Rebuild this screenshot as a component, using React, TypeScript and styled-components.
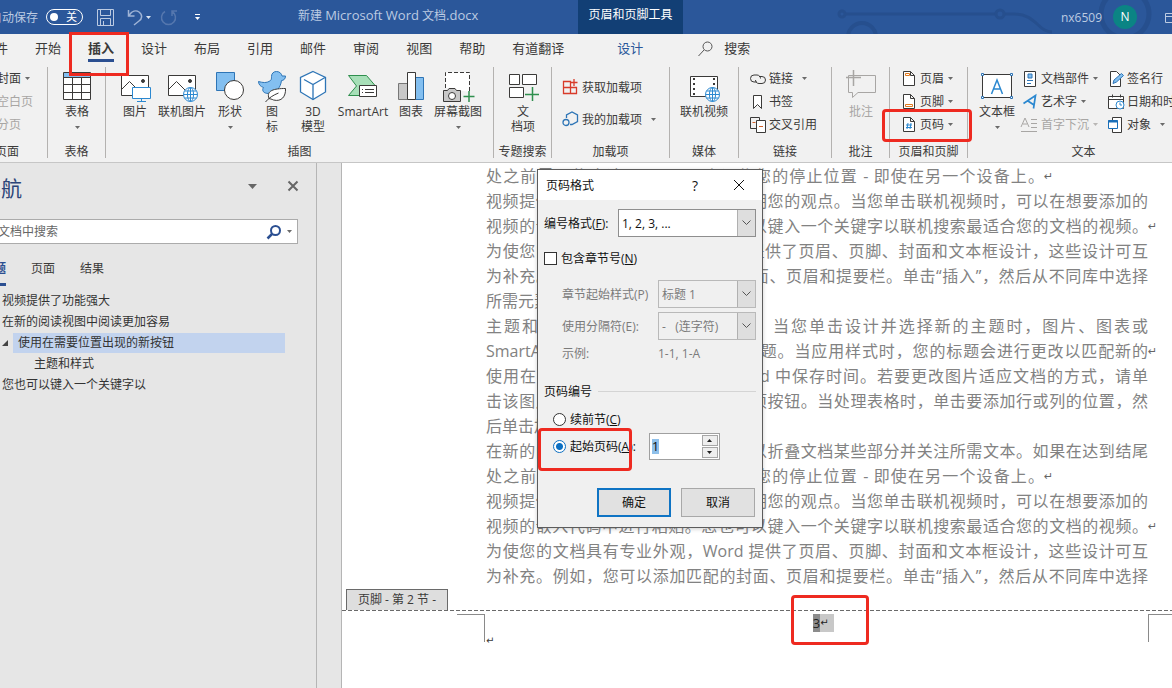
import React, { useEffect, useRef } from "react";
import styled, { createGlobalStyle, css } from "styled-components";

const GlobalStyle = createGlobalStyle`
  * { box-sizing: border-box; }
  body {
    margin: 0;
    overflow: hidden;
    background: #f1f1f1;
    color: #3b3a39;
    font: 12px/15px "Open Sans", "Noto Sans CJK SC", sans-serif;
  }
  button, input, select {
    margin: 0;
    padding: 0;
    border: 0;
    background: none;
    color: inherit;
    font: inherit;
  }
  svg { display: block; flex: none; overflow: visible; }
`;

const Shell = styled.div`
  position: relative;
  display: flex;
  flex-direction: column;
  height: 100vh;
  overflow: hidden;
`;

/* ---------- title bar ---------- */

const TitleBar = styled.header`
  position: relative;
  z-index: 0;
  display: flex;
  flex: none;
  align-items: center;
  height: 34px;
  overflow: hidden;
  background: #2b579a;
  color: #bccbe2;
`;

const QuickAccess = styled.div`
  display: flex;
  flex: 0 0 298px;
  align-items: center;
  height: 32px;
  margin-left: -10px;
`;

const AutoSave = styled.label`
  display: flex;
  align-items: center;
  gap: 8px;
  margin-right: 14px;
  white-space: nowrap;
`;

const Switch = styled.button`
  display: flex;
  align-items: center;
  justify-content: space-between;
  width: 37px;
  height: 16px;
  padding: 0 5px 0 3px;
  border: 1px solid #fff;
  border-radius: 8px;
  color: #fff;
  font-size: 11px;
  line-height: 14px;
  &::before {
    content: "";
    width: 8px;
    height: 8px;
    border-radius: 50%;
    background: #fff;
  }
`;

const QuickButton = styled.button<{ $after?: number }>`
  display: flex;
  align-items: center;
  gap: 3px;
  margin-right: ${(p) => p.$after ?? 8}px;
`;

const DocTitle = styled.div`
  flex: 0 0 290px;
  padding: 0 10px;
  margin-top: -4px;
  white-space: nowrap;
  span { font-size: 13px; }
`;

const ContextTab = styled.div`
  flex: 0 0 105px;
  height: 34px;
  line-height: 30px;
  text-align: center;
  background: #123f75;
  color: #fff;
`;

const Account = styled.button`
  display: flex;
  align-items: center;
  gap: 11px;
  margin-left: auto;
  margin-right: 28px;
`;

const Avatar = styled.span`
  width: 24px;
  height: 24px;
  border-radius: 50%;
  background: #0b8484;
  color: #fff;
  line-height: 24px;
  text-align: center;
`;

/* Decoration painted under the bar's contents */
const CircuitArt = styled.svg`
  position: absolute;
  z-index: -1;
  top: 0;
  right: 0;
`;

/* ---------- ribbon ---------- */

const TabRow = styled.nav`
  display: flex;
  flex: none;
  gap: 27px;
  height: 33px;
  margin-left: -18px;
  font-size: 13px;
  line-height: 28px;
`;

const Tab = styled.button<{ $active?: boolean; $context?: boolean }>`
  flex: none;
  height: 28px;
  white-space: nowrap;
  ${(p) => p.$active && css`
    border-bottom: 3px solid #2b4f91;
    font-weight: 600;
    line-height: 28px;
  `}
  ${(p) => p.$context && css`
    margin-left: 26px;
    color: #2b579a;
  `}
`;

const TabSearch = styled.button`
  display: flex;
  align-items: center;
  gap: 11px;
  height: 28px;
  margin-left: 28px;
`;

const Ribbon = styled.div`
  display: flex;
  flex: none;
  height: 96px;
  padding-bottom: 4px;
  border-bottom: 1px solid #c6c6c6;
  margin-left: -33px;
`;

const GroupBox = styled.section<{ $w: number }>`
  display: flex;
  flex: 0 0 ${(p) => p.$w}px;
  flex-direction: column;
  width: ${(p) => p.$w}px;
  border-right: 1px solid #b4b2b0;
`;

const GroupBody = styled.div<{ $pad: number }>`
  display: flex;
  flex: 1;
  min-height: 0;
  padding-left: ${(p) => p.$pad}px;
`;

const GroupLabel = styled.div`
  height: 14px;
  line-height: 16px;
  text-align: center;
  white-space: nowrap;
`;

const BigButton = styled.button<{ $w: number; $off?: boolean }>`
  display: flex;
  flex: 0 0 ${(p) => p.$w}px;
  flex-direction: column;
  align-items: center;
  padding-top: 3px;
  color: ${(p) => (p.$off ? "#a8a6a4" : "inherit")};
  white-space: nowrap;
  > span { margin-top: 2px; }
  > svg + span + svg { margin-top: 7px; }
`;

const Stack = styled.div<{ $row?: number; $pad?: number; $w?: number }>`
  display: grid;
  grid-auto-rows: ${(p) => p.$row ?? 23}px;
  align-content: start;
  width: ${(p) => (p.$w ? p.$w + "px" : "auto")};
  padding-top: ${(p) => p.$pad ?? 0}px;
`;

const SmallButton = styled.button<{ $off?: boolean; $wide?: boolean }>`
  display: flex;
  align-items: center;
  gap: 4px;
  color: ${(p) => (p.$off ? "#a8a6a4" : "inherit")};
  white-space: nowrap;
  > span + svg { margin-left: ${(p) => (p.$wide ? 5 : 0)}px; }
`;

/* ---------- navigation pane ---------- */

const Workspace = styled.main`
  position: relative;
  display: flex;
  flex: 1;
  min-height: 0;
`;

const NavPane = styled.aside`
  flex: 0 0 317px;
  overflow: hidden;
  border-right: 1px solid #b5b5b5;
  background: #e6e6e6;
`;

const NavInner = styled.div`
  margin: 0 18px 0 -20px;
`;

const NavHead = styled.div`
  display: flex;
  align-items: center;
  height: 56px;
  padding-bottom: 6px;
  h2 {
    flex: 1;
    margin: 0;
    color: #2b4478;
    font-size: 21px;
    font-weight: 400;
    line-height: 28px;
  }
`;

const HeadButton = styled.button`
  margin-left: 31px;
  padding-bottom: 4px;
`;

const SearchForm = styled.form`
  display: flex;
  align-items: center;
  gap: 6px;
  height: 25px;
  padding: 0 5px;
  border: 1px solid #ababab;
  background: #fff;
  input {
    flex: 1;
    min-width: 0;
    outline: 0;
    &::placeholder { color: #666; opacity: 1; }
  }
`;

const NavTabs = styled.div`
  display: flex;
  gap: 25px;
  height: 46px;
  padding: 14px 0 0 2px;
`;

const NavTab = styled.button<{ $active?: boolean }>`
  height: 28px;
  padding-bottom: 4px;
  border-bottom: 3px solid ${(p) => (p.$active ? "#2b4f91" : "transparent")};
  color: ${(p) => (p.$active ? "#2b4f91" : "inherit")};
  font-weight: ${(p) => (p.$active ? 700 : 400)};
`;

const Outline = styled.ul`
  margin: 0;
  padding: 0 13px 0 20px;
  list-style: none;
`;

const OutlineItem = styled.li<{ $level?: number; $open?: boolean }>`
  display: flex;
  align-items: center;
  height: 21px;
  padding-left: ${(p) => (p.$level ?? 0) * 16 + 2}px;
  white-space: nowrap;
  color: #333;
  a { color: inherit; text-decoration: none; }
  ${(p) => p.$open && css`
    padding-left: 2px;
    gap: 5px;
    a {
      flex: 1;
      height: 20px;
      padding-left: 5px;
      background: #c2d3ee;
      line-height: 20px;
    }
  `}
`;

const Gutter = styled.div`
  flex: 0 0 25px;
  border-right: 1px solid #b5b5b5;
  background: #e6e6e6;
`;

/* ---------- document ---------- */

const Page = styled.article`
  flex: 1;
  min-width: 0;
  overflow: hidden;
  background: #fff;
`;

const Copy = styled.div`
  padding: 1px 24px 0 144px;
  color: #828282;
  font-size: 16px;
  line-height: 25px;
`;

const Line = styled.div<{ $fit: "full" | "part" | "natural" }>`
  display: flex;
  height: 25px;
  padding-right: ${(p) => (p.$fit === "part" ? 104 : 0)}px;
  white-space: nowrap;
  > span:first-child {
    flex: ${(p) => (p.$fit === "natural" ? "none" : 1)};
    min-width: 0;
    text-align: justify;
    text-align-last: justify;
  }
`;

const Mark = styled.span`
  flex: none;
  width: 12px;
  margin-right: -12px;
  color: #666;
  font-family: "DejaVu Sans", sans-serif;
  font-size: 11px;
`;

const FooterTag = styled.div`
  width: 102px;
  height: 21px;
  margin-left: 4px;
  border: 1px solid #6a6a6a;
  border-bottom: 0;
  background: #dedede;
  line-height: 20px;
  text-align: center;
`;

const FooterArea = styled.div`
  display: flex;
  padding-left: 115px;
  padding-top: 4px;
  background: repeating-linear-gradient(90deg, #6a6a6a 0 4px, transparent 4px 6px) 0 0 / 100% 1px no-repeat;
`;

const Corner = styled.div<{ $side: "left" | "right" }>`
  flex: 0 0 ${(p) => (p.$side === "left" ? 28 : 24)}px;
  height: 28px;
  border-top: 1px solid #8a8a8a;
  border-${(p) => (p.$side === "left" ? "right" : "left")}: 1px solid #8a8a8a;
`;

const FooterMark = styled.div`
  flex: 0 0 12px;
  padding: 19px 0 0 1px;
  font-family: "DejaVu Sans", sans-serif;
  font-size: 10px;
`;

const FooterText = styled.div`
  display: flex;
  flex: 1;
  align-items: flex-start;
  justify-content: center;
  padding-left: 2px;
  color: #222;
  line-height: 18px;
  b { background: #8c8c8c; font-weight: 400; font-size: 13px; }
  span {
    width: 14px;
    background: #c8c8c8;
    font-family: "DejaVu Sans", sans-serif;
    font-size: 10px;
  }
`;

/* ---------- dialog ---------- */

const DialogBox = styled.section`
  position: absolute;
  top: 6px;
  left: 537px;
  width: 226px;
  border: 1px solid #5c5c5c;
  background: #f0f0f0;
  color: #111;
  box-shadow: 0 1px 4px rgba(0, 0, 0, 0.2);
`;

const DialogTitle = styled.div`
  display: flex;
  align-items: center;
  height: 30px;
  padding: 0 18px 0 8px;
  background: #fff;
  h3 { flex: 1; margin: 0; font-size: 12px; font-weight: 400; }
  button { font-size: 14px; margin-left: 36px; }
`;

const DialogBody = styled.form`
  padding: 9px 6px 10px;
`;

const Field = styled.div<{ $nested?: boolean; $h: number }>`
  display: flex;
  align-items: center;
  justify-content: space-between;
  height: ${(p) => p.$h}px;
  padding-left: ${(p) => (p.$nested ? 18 : 0)}px;
  color: ${(p) => (p.$nested ? "#7b7b7b" : "inherit")};
  white-space: nowrap;
  output { width: 98px; }
`;

const SelectBox = styled.span<{ $w: number; $off?: boolean }>`
  display: grid;
  grid-template-columns: 1fr 18px;
  width: ${(p) => p.$w}px;
  height: 28px;
  border: 1px solid ${(p) => (p.$off ? "#b9b9b9" : "#8e8e8e")};
  background: ${(p) => (p.$off ? "#f0f0f0" : "#fff")};
  select {
    grid-area: 1 / 1 / 2 / 3;
    min-width: 0;
    padding-left: 3px;
    appearance: none;
    outline: 0;
    opacity: 1;
  }
  span {
    display: grid;
    grid-area: 1 / 2;
    place-items: center;
    border-left: 1px solid #b0b0b0;
    background: #dedede;
    pointer-events: none;
  }
`;

const Choice = styled.label<{ $h: number; $pad?: number }>`
  display: flex;
  align-items: center;
  gap: 4px;
  height: ${(p) => p.$h}px;
  padding-left: ${(p) => p.$pad ?? 0}px;
  white-space: nowrap;
  input {
    flex: none;
    width: 13px;
    height: 13px;
    appearance: none;
    border: 1px solid #333;
    background: #fff;
  }
  input[type="radio"] { border-radius: 50%; }
  input[type="radio"]:checked {
    border-color: #0b6fc2;
    background: radial-gradient(circle, #0b6fc2 0 3px, #fff 4px);
  }
`;

const Legend = styled.div`
  display: flex;
  align-items: center;
  gap: 6px;
  height: 18px;
  margin: 20px 0 5px;
  &::after { content: ""; flex: 1; height: 1px; background: #d4d4d4; }
`;

const StartRow = styled.div`
  display: flex;
  align-items: center;
  gap: 13px;
  height: 27px;
`;

const Spinner = styled.span`
  display: flex;
  width: 71px;
  height: 27px;
  padding: 1px;
  border: 1px solid #a0a0a0;
  background: #fff;
  input {
    flex: 1;
    min-width: 0;
    padding-left: 1px;
    outline: 0;
    font-size: 13px;
    &::selection { background: #8fc0ea; color: #111; }
  }
  > span { display: grid; width: 16px; gap: 1px; }
  button {
    display: grid;
    place-items: center;
    border: 1px solid #a6a6a6;
    background: #eee;
  }
`;

const Actions = styled.div`
  display: flex;
  justify-content: flex-end;
  gap: 10px;
  margin: 28px 1px 0 0;
`;

const ActionButton = styled.button<{ $primary?: boolean }>`
  width: 74px;
  height: 29px;
  border: ${(p) => (p.$primary ? "2px solid #0f74c4" : "1px solid #a8a8a8")};
  background: #e1e1e1;
`;

/* Red callout frames laid over the window */
const Callout = styled.div<{ $x: number; $y: number; $w: number; $h: number; $r?: number }>`
  position: absolute;
  left: ${(p) => p.$x}px;
  top: ${(p) => p.$y}px;
  width: ${(p) => p.$w}px;
  height: ${(p) => p.$h}px;
  border: 3px solid #ee2a20;
  border-radius: ${(p) => p.$r ?? 0}px;
  pointer-events: none;
`;

/* ---------- icons ---------- */

type IconProps = { w?: number; h?: number; children: React.ReactNode; color?: string };
const Icon = ({ w = 16, h = w, color = "#3b3a39", children }: IconProps) => (
  <svg width={w} height={h} viewBox={`0 0 ${w} ${h}`} fill="none" stroke={color} strokeWidth="1" aria-hidden="true">
    {children}
  </svg>
);

const Caret = ({ color = "#6a6a6a" }: { color?: string }) => (
  <svg width="5" height="3" viewBox="0 0 5 3" aria-hidden="true"><path d="M0 0h5L2.5 3z" fill={color} /></svg>
);

const BLUE = "#2e75b6";
const FILL = "#83bff0";
const DARK = "#3b3a39";

const Globe = ({ x, y, r }: { x: number; y: number; r: number }) => (
  <g stroke="#2b88d0" fill="#fff">
    <circle cx={x} cy={y} r={r} />
    <ellipse cx={x} cy={y} rx={r / 2.3} ry={r} />
    <path d={`M${x - r} ${y}h${2 * r}M${x} ${y - r}v${2 * r}M${x - r + 1} ${y - r / 2}h${2 * r - 2}M${x - r + 1} ${y + r / 2}h${2 * r - 2}`} />
  </g>
);

const PictureFrame = () => (
  <>
    <path d="M2.500 5.500h27v20h-27z" fill="#fff" />
    <path d="M2.500 19.500l8-8 9 9" />
    <circle cx="24" cy="11" r="1.500" fill={DARK} />
  </>
);

const TableIcon = () => (
  <Icon w={32}>
    <path d="M2.500 2.500h27v27h-27z" fill="#fff" />
    <path d="M3 3h26v4H3z" fill={FILL} stroke="none" />
    <path d="M2.500 7.500h27M2.500 14.500h27M2.500 22.500h27M11.500 7v22M20.500 7v22" />
  </Icon>
);
const PicturesIcon = () => (
  <Icon w={32}>
    <PictureFrame />
    <path d="M13.500 17.500h18v11h-18z" fill="#fff" stroke="#2b88d0" />
    <path d="M22.500 28.500v3M18 31.500h9" stroke="#2b88d0" />
  </Icon>
);
const OnlinePicturesIcon = () => (<Icon w={32}><PictureFrame /><Globe x={24.5} y={24.5} r={7} /></Icon>);
const ShapesIcon = () => (
  <Icon w={32}>
    <path d="M2.500 2.500h18v18h-18z" fill={FILL} stroke={BLUE} />
    <circle cx="20" cy="20" r="9.500" fill="#fff" />
  </Icon>
);
const IconsIcon = () => (
  <Icon w={32}>
    <path d="M2.500 11.500c4 1 8 2 12-1 1-1 1-2 1-4 0-3 2-5 5-5 3 0 5 2 5.500 4.500h3.500c0 3-2 4.500-4 4.500-1 7-5 13-13 13-5 0-7-3-5-6-3-1-5-3-5-6z" fill={FILL} stroke={BLUE} />
    <path d="M13 28.500c-3-8 5-10 16.500-10 .5 8-4 13.500-12 11.500-2-1-3-1-4.500-1.500z" fill="#fff" />
    <path d="M9.500 32c3-4 8-7 13-9" />
  </Icon>
);
const CubeIcon = () => (
  <Icon w={32} color={BLUE}>
    <path d="M16 1.500l12.500 6v14.500l-12.500 7.500-12.500-7.500v-14.500z" fill="#fff" strokeWidth="1.300" />
    <path d="M7 9.500l9 5 12-7M16 14.500v15" strokeWidth="1.300" />
  </Icon>
);
const SmartArtIcon = () => (
  <Icon w={32}>
    <path d="M1.500 5.500h18l9 10.500-8 9.500h-19l8-9.500z" fill="#a7dfb8" stroke="#2f8f4e" />
    <path d="M12.500 15.500h17v11h-17z" fill="#fff" />
    <path d="M18 19.500h9M18 22.500h9M15 19.500h1M15 22.500h1" />
  </Icon>
);
const ChartIcon = () => (
  <Icon w={32}>
    <path d="M3.500 13.500h9v16h-9z" fill="#c8c8c8" stroke="#777" />
    <path d="M20.500 7.500h8v22h-8z" fill={FILL} stroke={BLUE} />
    <path d="M12.500 2.500h8v27h-8z" fill="#fff" />
  </Icon>
);
const ScreenshotIcon = () => (
  <Icon w={32}>
    <path d="M3.500 18V2.500h24V22" strokeDasharray="4 2" fill="#fff" />
    <path d="M1.500 20.500h4l1.500-2h6l1.500 2h4v11h-17z" fill="#c8c8c8" />
    <circle cx="10" cy="26" r="3.500" fill="#fff" />
    <path d="M27 21v11M21.500 26.500h11" stroke="#2f8f4e" strokeWidth="1.500" />
  </Icon>
);
const DocItemIcon = () => (
  <Icon w={32}>
    <path d="M2.500 4.500h10v10h-10zM15.500 4.500h14v10h-14zM2.500 17.500h14v10h-14z" fill="#fff" />
    <path d="M25.500 17v14M18 24.500h14" stroke="#2f8f4e" strokeWidth="1.500" />
  </Icon>
);
const VideoIcon = () => (
  <Icon w={32}>
    <path d="M2.500 6.500h27v20h-27z" fill="#fff" />
    <path d="M6 8v17M26 8v17" strokeDasharray="2 3" strokeWidth="2" />
    <Globe x={24.5} y={24.5} r={7} />
  </Icon>
);
const CommentIcon = () => (
  <Icon w={32} color="#a8a6a4">
    <path d="M3.500 5.500h27v17H13l-5.500 5v-5h-4z" />
    <path d="M8.500 0v16M1 7.500h15" strokeWidth="1.500" />
  </Icon>
);
const TextBoxIcon = () => (
  <Icon w={32}>
    <path d="M1.500 4.500h29v23h-29z" fill="#fff" />
    <path d="M10.500 24l5.500-14 5.500 14M12.500 19h7" stroke="#2b88d0" strokeWidth="1.500" />
    <path d="M0.500 3.500h2v2h-2zM29.500 3.500h2v2h-2zM0.500 26.500h2v2h-2zM29.500 26.500h2v2h-2z" stroke={BLUE} fill="#fff" />
  </Icon>
);
const GetAddinsIcon = () => (
  <Icon color="#d83b2a">
    <path d="M1.500 2.500h7v6h-7zM1.500 8.500h7v6h-7zM8.500 8.500h6v6h-6zM12 0v7M8.500 3.500h7" strokeWidth="1.300" />
  </Icon>
);
const MyAddinsIcon = () => (
  <Icon color={BLUE}>
    <path d="M4.500 7V4l5.500-3 5.500 3v6.500l-5.500 3H8" strokeWidth="1.300" />
    <circle cx="4" cy="11.500" r="3" strokeWidth="1.300" />
  </Icon>
);
const LinkIcon = () => (
  <Icon w={15} h={16}>
    <path d="M7 11H4a3.500 3.500 0 010-7h3c2 0 3.500 1.500 3.500 3.500M9 5.500h3a3.500 3.500 0 010 7H9C7 12.500 5.500 11 5.500 9" />
  </Icon>
);
const BookmarkIcon = () => (<Icon w={15} h={16}><path d="M3.500 1.500h8v13l-4-4-4 4z" fill="#fff" /></Icon>);
const CrossRefIcon = () => (
  <Icon w={15} h={16}>
    <path d="M6 11.500H0.500v-11h9V3" /><path d="M6.500 3.500h9v12h-9z" fill="#fff" />
    <path d="M2.500 5.500h3M9 9.500h4" stroke="#d2622a" />
  </Icon>
);
const Sheet = () => <path d="M1.500 1.500h7l4 4v10h-11zM8.500 1.500v4h4" fill="#fff" />;
const HeaderIcon = () => (<Icon w={14} h={17}><Sheet /><path d="M3.500 3.500h4v2h-4z" stroke="#e07a1f" /></Icon>);
const FooterIcon = () => (<Icon w={14} h={17}><Sheet /><path d="M3.500 11.500h7v2h-7z" stroke="#e07a1f" /></Icon>);
const PageNumIcon = () => (<Icon w={14} h={17}><Sheet /><path d="M6 7l-1 6M9 7l-1 6M4 9h6M4 11.500h6" stroke="#2b88d0" /></Icon>);
const PartsIcon = () => (
  <Icon w={14} h={16}>
    <path d="M1.500 0.500h11v15h-11z" fill="#fff" />
    <path d="M5 3h4v4H5zM4 9.500h6M4 12.500h4" fill={FILL} stroke={BLUE} />
  </Icon>
);
const WordArtIcon = () => (<Icon w={14} h={16} color="#2b88d0"><path d="M0.500 9.500L12.500 1.500l-2 13M5 7l6 4" strokeWidth="1.700" /></Icon>);
const DropCapIcon = () => (
  <Icon w={14} h={16} color="#a8a6a4"><path d="M-2 10l4-9 4 9M0 7h4M8 2.500h6M8 6.500h6M8 10.500h6M-2 14.500h16" /></Icon>
);
const SignatureIcon = () => (
  <Icon w={14} h={16}>
    <path d="M1.500 0.500h6l4 4v11h-10z" fill="#fff" />
    <path d="M4 12.500l1-3.500 7.500-6.500 2 2L7.500 11z" fill={FILL} stroke={BLUE} />
  </Icon>
);
const DateIcon = () => (
  <Icon w={14} h={16}>
    <path d="M-0.500 2.500h15v12h-15zM-0.500 5.500h15M3.500 0.500v3M11.500 0.500v3" fill="#fff" />
    <circle cx="11" cy="11" r="4" fill="#fff" stroke="#2b88d0" /><path d="M11 8.500V11h2" stroke="#2b88d0" />
  </Icon>
);
const ObjectIcon = () => (
  <Icon w={14} h={16}>
    <path d="M3.500 0.500h9v15h-9z" fill="#fff" />
    <path d="M-0.500 3.500h9v8h-9z" fill="#fff" stroke="#1a6fb8" /><path d="M-1 4.500h10" stroke="#1a6fb8" strokeWidth="2" />
  </Icon>
);
const Chevron = () => (
  <svg width="9" height="6" viewBox="0 0 9 6" fill="none" stroke="#555" aria-hidden="true"><path d="M0.500 0.500l4 4 4-4" /></svg>
);

/* ---------- pieces ---------- */

type GroupProps = { label: string; w: number; pad?: number; children: React.ReactNode };
const Group = ({ label, w, pad = 0, children }: GroupProps) => (
  <GroupBox $w={w} aria-label={label}>
    <GroupBody $pad={pad}>{children}</GroupBody>
    <GroupLabel>{label}</GroupLabel>
  </GroupBox>
);

type BigProps = { icon: React.ReactNode; text: string[]; w: number; menu?: boolean; off?: boolean };
const Big = ({ icon, text, w, menu, off }: BigProps) => (
  <BigButton $w={w} $off={off} type="button">
    {icon}
    <span>{text.map((t, i) => <React.Fragment key={t}>{i > 0 && <br />}{t}</React.Fragment>)}</span>
    {menu && <Caret />}
  </BigButton>
);

type SmallProps = { icon?: React.ReactNode; text: string; menu?: boolean; off?: boolean; wide?: boolean };
const Small = ({ icon, text, menu, off, wide }: SmallProps) => (
  <SmallButton $off={off} $wide={wide} type="button">
    {icon}
    <span>{text}</span>
    {menu && <Caret color={off ? "#b8b6b4" : undefined} />}
  </SmallButton>
);

const TABS = ["开始", "插入", "设计", "布局", "引用", "邮件", "审阅", "视图", "帮助", "有道翻译"];

type CopyLine = { text: string; fit?: "full" | "part" | "natural"; end?: boolean };
const VIDEO: CopyLine[] = [
  { text: "处之前需要停止读取，Word 会记住您的停止位置 - 即使在另一个设备上。", fit: "part", end: true },
  { text: "视频提供了功能强大的方法帮助您证明您的观点。当您单击联机视频时，可以在想要添加的" },
  { text: "视频的嵌入代码中进行粘贴。您也可以键入一个关键字以联机搜索最适合您的文档的视频。", end: true },
  { text: "为使您的文档具有专业外观，Word 提供了页眉、页脚、封面和文本框设计，这些设计可互" },
  { text: "为补充。例如，您可以添加匹配的封面、页眉和提要栏。单击“插入”，然后从不同库中选择" },
];
const COPY: CopyLine[] = [
  ...VIDEO,
  { text: "所需元素。", fit: "natural", end: true },
  { text: "主题和样式也有助于文档保持协调。当您单击设计并选择新的主题时，图片、图表或" },
  { text: "SmartArt 图形将会更改以匹配新的主题。当应用样式时，您的标题会进行更改以匹配新的", end: true },
  { text: "使用在需要位置出现的新按钮在 Word 中保存时间。若要更改图片适应文档的方式，请单" },
  { text: "击该图片，图片旁边将会显示布局选项按钮。当处理表格时，单击要添加行或列的位置，然" },
  { text: "后单击加号。", fit: "natural", end: true },
  { text: "在新的阅读视图中阅读更加容易。可以折叠文档某些部分并关注所需文本。如果在达到结尾" },
  ...VIDEO,
];

const PageNumberDialog = () => {
  const start = useRef<HTMLInputElement>(null);
  useEffect(() => {
    start.current?.focus();
    start.current?.select();
  }, []);
  return (
    <DialogBox role="dialog" aria-labelledby="dlg-title">
      <DialogTitle>
        <h3 id="dlg-title">页码格式</h3>
        <button type="button">?</button>
        <button type="button" aria-label="关闭">
          <Icon w={10} color="#111"><path d="M0 0l10 10M10 0L0 10" /></Icon>
        </button>
      </DialogTitle>
      <DialogBody onSubmit={(e) => e.preventDefault()}>
        <Field $h={28}>
          <label htmlFor="fmt">编号格式(<u>F</u>):</label>
          <SelectBox $w={138}><select id="fmt"><option>1, 2, 3, ...</option></select><span><Chevron /></span></SelectBox>
        </Field>
        <Choice $h={43}><input type="checkbox" /><span>包含章节号(<u>N</u>)</span></Choice>
        <Field $h={28} $nested>
          <label htmlFor="sty">章节起始样式(P)</label>
          <SelectBox $w={98} $off><select id="sty"><option>标题 1</option></select><span><Chevron /></span></SelectBox>
        </Field>
        <Field $h={36} $nested>
          <label htmlFor="sep">使用分隔符(E):</label>
          <SelectBox $w={98} $off><select id="sep"><option>-&nbsp;&nbsp;&nbsp;(连字符)</option></select><span><Chevron /></span></SelectBox>
        </Field>
        <Field $h={18} $nested><span>示例:</span><output>1-1, 1-A</output></Field>
        <Legend>页码编号</Legend>
        <Choice $h={28} $pad={9}><input type="radio" name="numbering" /><span>续前节(<u>C</u>)</span></Choice>
        <StartRow>
          <Choice $h={27} $pad={9}><input type="radio" name="numbering" defaultChecked /><span>起始页码(<u>A</u>):</span></Choice>
          <Spinner>
            <input ref={start} aria-label="起始页码" defaultValue="1" />
            <span>
              <button type="button" aria-label="增加"><Icon w={5} h={3}><path d="M0 3h5L2.500 0z" fill="#222" stroke="none" /></Icon></button>
              <button type="button" aria-label="减少"><Caret color="#222" /></button>
            </span>
          </Spinner>
        </StartRow>
        <Actions>
          <ActionButton $primary type="submit">确定</ActionButton>
          <ActionButton type="button">取消</ActionButton>
        </Actions>
      </DialogBody>
    </DialogBox>
  );
};

export default function App() {
  return (
    <>
      <GlobalStyle />
      <Shell>
        <TitleBar>
          <CircuitArt width="340" height="34" viewBox="0 0 340 34" fill="none" stroke="#264f8e" strokeWidth="3" aria-hidden="true">
            <circle cx="10" cy="14" r="3" /><path d="M13 14h151M172 14h10c22 0 24 18 38 18" />
            <circle cx="168" cy="14" r="4" /><circle cx="30" cy="37" r="14" strokeWidth="4" />
            <circle cx="293" cy="14" r="24" strokeWidth="5" />
          </CircuitArt>
          <QuickAccess>
            <AutoSave>自动保存<Switch type="button" role="switch" aria-checked="false">关</Switch></AutoSave>
            <QuickButton $after={13} aria-label="保存">
              <Icon w={17} color="#bccbe2"><path d="M0.500 0.500h16v16H0.500zM3.500 0.500v6h10v-6M3.500 16.500v-7h10v7M6.500 16v-4" /></Icon>
            </QuickButton>
            <QuickButton $after={9} aria-label="撤消">
              <Icon w={16} color="#9fb4d6"><path d="M1.500 1v6h6M2 6.500C5 2 9 1 12 3c4 3 3 7 0 9l-5 4" strokeWidth="1.500" /></Icon>
              <Caret color="#dbe4f1" />
            </QuickButton>
            <QuickButton $after={17} aria-label="重复">
              <Icon w={17} color="#5577ae"><path d="M5 2.500a7 7 0 107 0M12 7V2h5" strokeWidth="1.500" /></Icon>
            </QuickButton>
            <QuickButton $after={0} aria-label="自定义快速访问工具栏">
              <Icon w={7} h={7} color="#fff"><path d="M1 0.500h5" /><path d="M1 3h5L3.500 6z" fill="#fff" stroke="none" /></Icon>
            </QuickButton>
          </QuickAccess>
          <DocTitle>新建 <span>Microsoft Word</span> 文档<span>.docx</span></DocTitle>
          <ContextTab>页眉和页脚工具</ContextTab>
          <Account type="button"><span>nx6509</span><Avatar>N</Avatar></Account>
          <Icon w={7} h={9} color="#bccbe2"><path d="M14 0.500H0.500v9H14M0.500 3.500H14" /></Icon>
        </TitleBar>

        <TabRow>
          <Tab>文件</Tab>
          {TABS.map((t) => <Tab key={t} $active={t === "插入"}>{t}</Tab>)}
          <Tab $context>设计</Tab>
          <TabSearch>
            <Icon w={15} color="#555"><circle cx="9.500" cy="5.500" r="4.500" /><path d="M6 9l-5.500 6" /></Icon>
            搜索
          </TabSearch>
        </TabRow>

        <Ribbon>
          <Group label="页面" w={81} pad={30}>
            <Stack>
              <Small text="封面" menu />
              <Small text="空白页" off />
              <Small text="分页" off />
            </Stack>
          </Group>
          <Group label="表格" w={58} pad={6}><Big w={46} icon={<TableIcon />} text={["表格"]} menu /></Group>
          <Group label="插图" w={388} pad={6}>
            <Big w={46} icon={<PicturesIcon />} text={["图片"]} />
            <Big w={48} icon={<OnlinePicturesIcon />} text={["联机图片"]} />
            <Big w={48} icon={<ShapesIcon />} text={["形状"]} menu />
            <Big w={36} icon={<IconsIcon />} text={["图", "标"]} />
            <Big w={46} icon={<CubeIcon />} text={["3D", "模型"]} />
            <Big w={54} icon={<SmartArtIcon />} text={["SmartArt"]} />
            <Big w={42} icon={<ChartIcon />} text={["图表"]} />
            <Big w={52} icon={<ScreenshotIcon />} text={["屏幕截图"]} menu />
          </Group>
          <Group label="专题搜索" w={58} pad={6}><Big w={46} icon={<DocItemIcon />} text={["文", "档项"]} /></Group>
          <Group label="加载项" w={118} pad={10}>
            <Stack $row={32} $pad={4}>
              <Small icon={<GetAddinsIcon />} text="获取加载项" />
              <Small icon={<MyAddinsIcon />} text="我的加载项" menu wide />
            </Stack>
          </Group>
          <Group label="媒体" w={69} pad={9}><Big w={50} icon={<VideoIcon />} text={["联机视频"]} /></Group>
          <Group label="链接" w={93} pad={11}>
            <Stack>
              <Small icon={<LinkIcon />} text="链接" menu wide />
              <Small icon={<BookmarkIcon />} text="书签" />
              <Small icon={<CrossRefIcon />} text="交叉引用" />
            </Stack>
          </Group>
          <Group label="批注" w={58} pad={6}><Big w={46} icon={<CommentIcon />} text={["批注"]} off /></Group>
          <Group label="页眉和页脚" w={78} pad={12}>
            <Stack>
              <Small icon={<HeaderIcon />} text="页眉" menu />
              <Small icon={<FooterIcon />} text="页脚" menu />
              <Small icon={<PageNumIcon />} text="页码" menu />
            </Stack>
          </Group>
          <Group label="文本" w={232} pad={3}>
            <Big w={52} icon={<TextBoxIcon />} text={["文本框"]} menu />
            <Stack $w={86}>
              <Small icon={<PartsIcon />} text="文档部件" menu />
              <Small icon={<WordArtIcon />} text="艺术字" menu />
              <Small icon={<DropCapIcon />} text="首字下沉" menu off />
            </Stack>
            <Stack>
              <Small icon={<SignatureIcon />} text="签名行" />
              <Small icon={<DateIcon />} text="日期和时间" />
              <Small icon={<ObjectIcon />} text="对象" menu wide />
            </Stack>
          </Group>
        </Ribbon>

        <Workspace>
          <NavPane>
            <NavInner>
              <NavHead>
                <h2>导航</h2>
                <HeadButton aria-label="任务窗格选项"><Icon w={9} h={5}><path d="M0 0h9L4.500 5z" fill="#666" stroke="none" /></Icon></HeadButton>
                <HeadButton aria-label="关闭"><Icon w={10} color="#666"><path d="M0.500 0.500l9 9M9.500 0.500l-9 9" strokeWidth="2" /></Icon></HeadButton>
              </NavHead>
              <SearchForm onSubmit={(e) => e.preventDefault()}>
                <input aria-label="在文档中搜索" placeholder="在文档中搜索" />
                <Icon w={14} color="#2b4f91"><circle cx="8.500" cy="5.500" r="4.500" strokeWidth="2" /><path d="M5 9l-4.500 4.500" strokeWidth="2.500" /></Icon>
                <Caret />
              </SearchForm>
              <NavTabs>
                <NavTab $active>标题</NavTab>
                <NavTab>页面</NavTab>
                <NavTab>结果</NavTab>
              </NavTabs>
              <Outline>
                <OutlineItem><a href="#video">视频提供了功能强大</a></OutlineItem>
                <OutlineItem><a href="#reading">在新的阅读视图中阅读更加容易</a></OutlineItem>
                <OutlineItem $open>
                  <Icon w={6} h={6}><path d="M6 0v6H0z" fill="#444" stroke="none" /></Icon>
                  <a href="#buttons">使用在需要位置出现的新按钮</a>
                </OutlineItem>
                <OutlineItem $level={2}><a href="#themes">主题和样式</a></OutlineItem>
                <OutlineItem><a href="#keyword">您也可以键入一个关键字以</a></OutlineItem>
              </Outline>
            </NavInner>
          </NavPane>
          <Gutter />
          <Page>
            <Copy>
              {COPY.map((l, i) => (
                <Line key={i} $fit={l.fit ?? "full"}>
                  <span>{l.text}</span>
                  {l.end && <Mark>↵</Mark>}
                </Line>
              ))}
            </Copy>
            <FooterTag>页脚 - 第 2 节 -</FooterTag>
            <FooterArea>
              <Corner $side="left" />
              <FooterMark>↵</FooterMark>
              <FooterText><b>3</b><span>↵</span></FooterText>
              <Corner $side="right" />
            </FooterArea>
          </Page>
          <PageNumberDialog />
        </Workspace>

        <Callout $x={69} $y={32} $w={60} $h={44} />
        <Callout $x={882} $y={109} $w={90} $h={33} $r={4} />
        <Callout $x={538} $y={428} $w={94} $h={43} $r={4} />
        <Callout $x={791} $y={595} $w={78} $h={50} $r={4} />
      </Shell>
    </>
  );
}
